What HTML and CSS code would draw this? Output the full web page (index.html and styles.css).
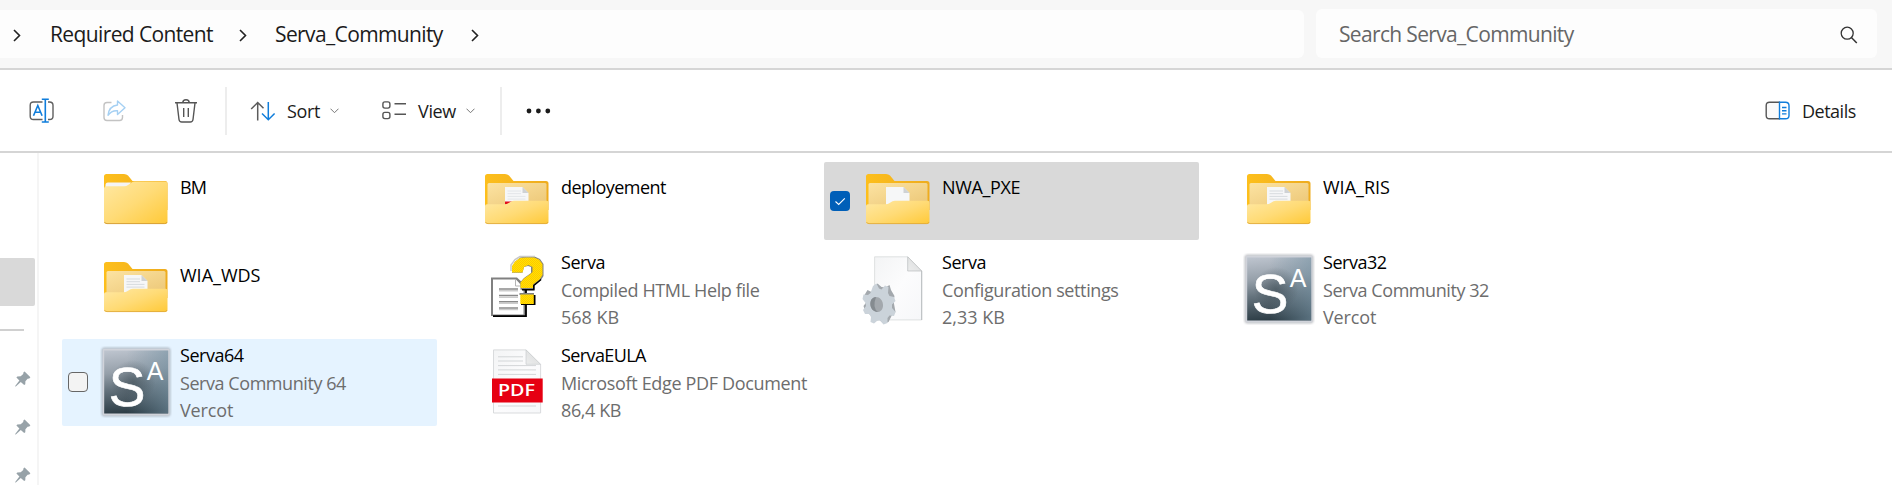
FILE: index.html
```html
<!DOCTYPE html>
<html lang="en">
<head>
<meta charset="utf-8">
<title>Serva_Community</title>
<link rel="stylesheet" href="styles.css">
</head>
<body>
<svg class="defs" width="0" height="0" aria-hidden="true">
  <defs>
    <linearGradient id="front" x1="0" y1="0" x2="1" y2="1"><stop offset="0" stop-color="#ffe8a3"/><stop offset=".5" stop-color="#ffdb76"/><stop offset="1" stop-color="#ffc937"/></linearGradient>
    <linearGradient id="back" x1="0" y1="0" x2="1" y2="0"><stop offset="0" stop-color="#fdbf1c"/><stop offset="1" stop-color="#eeac1f"/></linearGradient>
    <linearGradient id="inner" x1="0" y1="0" x2="1" y2="1"><stop offset="0" stop-color="#fce3a2"/><stop offset="1" stop-color="#ecc777"/></linearGradient>
    <linearGradient id="page" x1="0" y1="0" x2="1" y2="1"><stop offset="0" stop-color="#f3f4f5"/><stop offset=".5" stop-color="#fcfcfd"/><stop offset="1" stop-color="#f6f7f9"/></linearGradient>
    <linearGradient id="fold" x1="0" y1="1" x2="1" y2="0"><stop offset="0" stop-color="#eceded"/><stop offset="1" stop-color="#d9dadb"/></linearGradient>
    <linearGradient id="slate" x1=".2" y1="0" x2=".3" y2="1"><stop offset="0" stop-color="#bcc3cd"/><stop offset=".35" stop-color="#959fa9"/><stop offset=".6" stop-color="#66747e"/><stop offset="1" stop-color="#2c3c45"/></linearGradient>
    <linearGradient id="sheen" x1="0" y1="0" x2="1" y2="0"><stop offset=".35" stop-color="#7894a5" stop-opacity="0"/><stop offset="1" stop-color="#7894a5" stop-opacity=".6"/></linearGradient>
    <radialGradient id="shade" cx=".45" cy=".5" r=".35"><stop offset="0" stop-color="#38464e" stop-opacity=".55"/><stop offset="1" stop-color="#38464e" stop-opacity="0"/></radialGradient>
    <filter id="glow" x="-20%" y="-20%" width="140%" height="140%"><feGaussianBlur stdDeviation="1.3"/></filter>
    <pattern id="dither" width="2" height="2" patternUnits="userSpaceOnUse"><rect width="2" height="2" fill="#ffe600"/><rect width="1" height="1" fill="#ffc400"/><rect x="1" y="1" width="1" height="1" fill="#ffc400"/></pattern>

    <symbol id="folder-back" viewBox="0 0 72 72">
      <path d="M4 22V11.500Q4 9 6.500 9H24Q26.500 9 28 10.500L32.500 16H65Q67.500 16 67.500 18.500V45H4z" fill="url(#back)"/>
    </symbol>
    <symbol id="folder-open" viewBox="0 0 72 72">
      <use href="#folder-back"/>
      <path d="M6.500 40V19.500Q6.500 18 8 18H64Q65.500 18 65.500 19.500V40z" fill="url(#inner)"/>
    </symbol>
    <symbol id="folder-front" viewBox="0 0 72 72">
      <path d="M4 41Q4 39.300 6 39.300H23Q26 39.300 28 37.800L30.500 36.300Q31.500 35.700 33 35.700H65.500Q67.500 35.700 67.500 38V56.500Q67.500 59 65 59H6.500Q4 59 4 56.500z" fill="url(#front)"/>
      <path d="M4.500 57Q5 58.600 7 58.600H64.500Q66.700 58.600 67 57" fill="none" stroke="#dca63a" stroke-width=".8"/>
    </symbol>
    <symbol id="sheet" viewBox="0 0 72 72">
      <path d="M24 40V22H41.500L47.500 28V40z" fill="#f6f7f8"/>
      <path d="M41.500 22V28H47.500z" fill="#cfd2d4"/>
    </symbol>
    <symbol id="sheet-lines" viewBox="0 0 72 72">
      <path d="M26.500 26H40M26.500 28.700H40M26.500 31.400H44.500M26.500 34.100H44.500" stroke="#d7dbde" stroke-width="1"/>
    </symbol>
    <symbol id="serva" viewBox="0 0 72 72">
      <rect x="1.500" y="1.500" width="69" height="69" rx="3" fill="#777c84" opacity=".45" filter="url(#glow)"/>
      <rect x="2.800" y="2.800" width="66.700" height="66.700" rx="1" fill="#d0d3da"/>
      <g>
        <rect x="4.200" y="4.500" width="64" height="63" fill="url(#slate)"/>
        <rect x="4.200" y="4.500" width="64" height="63" fill="url(#sheen)"/>
        <rect x="4.200" y="4.500" width="64" height="63" fill="url(#shade)"/>
      </g>
      <text x="8.800" y="60.300" class="logo-s">S</text>
      <text x="46.700" y="34" class="logo-a">A</text>
    </symbol>
    <symbol id="pin" viewBox="0 0 16 16">
      <path d="M9.600.6 15.400 6.200 14.300 7.500 12.600 7.800 10.400 10.300 10.300 13.200 9.200 14 5.800 11 .8 15.600 0 15.200 4.400 9.600 1.400 6.600 2.300 5.500 5.700 5.300 8.200 3 8.500 1.300z" fill="#97a2a8"/>
    </symbol>
    <symbol id="next" viewBox="0 0 8 13"><path d="M1 1 6.500 6.500 1 12" fill="none" stroke="#222" stroke-width="1.600"/></symbol>
    <symbol id="down" viewBox="0 0 9 6"><path d="M.5.700 4.500 4.700 8.500.700" fill="none" stroke="#777" stroke-width="1"/></symbol>
  </defs>
</svg>

<header class="nav">
  <div class="address">
    <svg class="next n1"><use href="#next"/></svg>
    <span class="crumb c1">Required Content</span>
    <svg class="next n2"><use href="#next"/></svg>
    <span class="crumb c2">Serva_Community</span>
    <svg class="next n3"><use href="#next"/></svg>
  </div>
  <div class="search">
    <span class="search-text">Search Serva_Community</span>
    <svg class="search-icon" viewBox="0 0 18 18"><circle cx="7.200" cy="7.200" r="6" fill="none" stroke="#333" stroke-width="1.300"/><path d="M11.400 11.400 16.800 17" stroke="#333" stroke-width="1.500"/></svg>
  </div>
</header>

<div class="toolbar">
  <svg class="tool rename" viewBox="0 0 26 26" fill="none">
    <path d="M13.500 4H4.500Q1.200 4 1.200 7.300V18.200Q1.200 21.500 4.500 21.500H13.500M19 4H20.500Q24 4 24 7.300V18.200Q24 21.500 20.500 21.500H19" stroke="#5f5f5f" stroke-width="1.400"/>
    <path d="M12.800 1.200H19.800M12.800 24H19.800M16.300 1.200V24" stroke="#0f7ddb" stroke-width="1.600"/>
    <path d="M4.500 17.700 8.800 7.500 13.100 17.700M5.900 14.300H11.700" stroke="#0f7ddb" stroke-width="1.600"/>
  </svg>
  <svg class="tool share" viewBox="0 0 26 26" fill="none">
    <path d="M9.500 4.500H5Q2 4.500 2 7.500V19.500Q2 22.500 5 22.500H17.500Q20.500 22.500 20.500 19.500V17" stroke="#c3c3c3" stroke-width="1.400"/>
    <path d="M15.500 3 23 9.800 15.500 16.500V12.800Q9.500 12.300 6 17.300Q7 8 15.500 7z" stroke="#a5d0f3" stroke-width="1.400" stroke-linejoin="round"/>
  </svg>
  <svg class="tool trash" viewBox="0 0 26 26" fill="none" stroke="#555" stroke-width="1.400">
    <path d="M2 4.800H24M9.800 4.800Q9.800 1.800 13 1.800T16.200 4.800M4 5 6 21.500Q6.300 24 8.800 24H17.200Q19.700 24 20 21.500L22 5M10.700 10V19M15.300 10V19"/>
  </svg>
  <i class="divider d1"></i>
  <svg class="tool arrows" viewBox="0 0 26 26" fill="none" stroke-width="1.500">
    <path d="M7.700 22.500V4.500M1.200 11 7.700 4.500 13.500 10.300" stroke="#5c5c5c"/>
    <path d="M18.300 4V22M12 15.500 18.300 21.800 24.600 15.500" stroke="#0f7ddb"/>
  </svg>
  <span class="label sort">Sort</span>
  <svg class="down"><use href="#down"/></svg>
  <svg class="tool list" viewBox="0 0 26 26" fill="none" stroke="#555" stroke-width="1.400">
    <rect x="1.900" y="3.900" width="7" height="6.200" rx="2"/><rect x="1.900" y="14.400" width="7" height="6.200" rx="2"/>
    <path d="M13.500 5.800H25M13.500 16.300H25"/>
  </svg>
  <span class="label view">View</span>
  <svg class="down"><use href="#down"/></svg>
  <i class="divider d2"></i>
  <svg class="more" viewBox="0 0 25 6"><circle cx="3" cy="3" r="2.400"/><circle cx="12.400" cy="3" r="2.400"/><circle cx="21.800" cy="3" r="2.400"/></svg>
  <svg class="tool panel" viewBox="0 0 26 20" fill="none" stroke-width="1.400">
    <path d="M15 1.200H4.500Q1.200 1.200 1.200 4.500V14.500Q1.200 17.800 4.500 17.800H15" stroke="#555" fill="#fafafa"/>
    <path d="M14.500 1.200H20.500Q24 1.200 24 4.500V14.500Q24 17.800 20.500 17.800H14.500z" stroke="#0f7ddb"/>
    <path d="M17 6.500H21.500M17 9.700H21.500M17 12.900H21.500" stroke="#0f7ddb"/>
  </svg>
  <span class="label details">Details</span>
</div>

<div class="body">
  <aside class="side">
    <div class="side-selected"></div>
    <div class="side-rule"></div>
    <svg class="pin"><use href="#pin"/></svg>
    <svg class="pin"><use href="#pin"/></svg>
    <svg class="pin"><use href="#pin"/></svg>
  </aside>
  <main class="files">
    <div class="item">
      <i class="check none"></i>
      <svg class="icon" viewBox="0 0 72 72">
        <use href="#folder-back"/>
        <path d="M5.500 24V20Q5.500 17.500 8 17.500H31L28 22z" fill="#f4f4f6"/>
        <path d="M4 23.500Q4 21.300 6.500 21.300H24Q26.500 21.300 28 20L32 17.200Q33 16.500 34.500 16.500H65.200Q67.500 16.500 67.500 19V56.500Q67.500 59 65 59H6.500Q4 59 4 56.500z" fill="url(#front)"/>
        <path d="M4.500 57Q5 58.600 7 58.600H64.500Q66.700 58.600 67 57" fill="none" stroke="#d39c35" stroke-width=".9"/>
      </svg>
      <div class="text"><span class="name t-bm">BM</span></div>
    </div>
    <div class="item">
      <i class="check none"></i>
      <svg class="icon" viewBox="0 0 72 72"><use href="#folder-open"/><use href="#sheet"/><use href="#sheet-lines" opacity=".6"/><path d="M24 36.500H34L30 40H24z" fill="#e30d1b"/><use href="#folder-front"/></svg>
      <div class="text"><span class="name t-dep">deployement</span></div>
    </div>
    <div class="item selected">
      <i class="check on"><svg viewBox="0 0 20 20"><path d="M5.500 10.500 8.700 13.500 14.800 7.300" fill="none" stroke="#fff" stroke-width="1.100"/></svg></i>
      <svg class="icon" viewBox="0 0 72 72"><use href="#folder-open"/><use href="#sheet"/><use href="#folder-front"/></svg>
      <div class="text"><span class="name t-nwa">NWA_PXE</span></div>
    </div>
    <div class="item">
      <i class="check none"></i>
      <svg class="icon" viewBox="0 0 72 72"><use href="#folder-open"/><use href="#sheet"/><use href="#sheet-lines"/><use href="#folder-front"/></svg>
      <div class="text"><span class="name t-ris">WIA_RIS</span></div>
    </div>

    <div class="item tall">
      <i class="check none"></i>
      <svg class="icon" viewBox="0 0 72 72"><use href="#folder-open"/><use href="#sheet"/><use href="#sheet-lines"/><use href="#folder-front"/></svg>
      <div class="text"><span class="name t-wds">WIA_WDS</span></div>
    </div>
    <div class="item tall">
      <i class="check none"></i>
      <svg class="icon" viewBox="0 0 72 72">
        <path d="M10 24.500H36L45 33V63H10z" fill="#808080"/>
        <path d="M12 63.200H45V33" fill="none" stroke="#000" stroke-width="1.800"/>
        <path d="M12 26.500H34.500V32.500H42.500V61.500H12z" fill="#fff"/>
        <path d="M34.500 26V33H41" fill="#fff" stroke="#b5b5b5"/>
        <path d="M18 36H37M18 42.500H37M18 48.700H37M18 55H37" stroke="#8a8a8a" stroke-width="1.600"/>
        <path d="M18 37.700H37M18 44.200H37M18 50.400H37M18 56.600H37" stroke="#ccc" stroke-width="1.400"/>
        <path d="M40 42H54.500V52H40z" fill="#000"/>
        <path d="M38.500 40H53V42H38.500z" fill="#808080"/>
        <path d="M39.300 41.500H52.800V51H39.300z" fill="url(#dither)"/>
        <path d="M31 19.800V14L34 9 39 4.500 46 3.300H53L59 6 62.500 11V23L60 27 53.500 32.500V36.800H39.500V29L43 25 50 20V14L47 13 43 14 41.500 19.800z" fill="#808080"/>
        <path d="M41 36.700H52.800V32.500L60 26.500" fill="none" stroke="#000" stroke-width="1.600"/>
        <path d="M30 18V12L34 6.500 39 3.500H54" fill="none" stroke="#c8c8c8" stroke-width="1.500"/>
        <path d="M31 19.500V13L34 8.500 39 5 45 4.500H53L58 6.500 61.500 11V22L58.500 26.500 52 31.500V35H39.500V29.500L43 25.500 48 22 51.500 19V14L47.500 12 43 14 41.500 19.500z" fill="url(#dither)"/>
      </svg>
      <div class="text full"><span class="name t-serva">Serva</span><span class="meta t-chm">Compiled HTML Help file</span><span class="meta t-568">568 KB</span></div>
    </div>
    <div class="item tall">
      <i class="check none"></i>
      <svg class="icon" viewBox="0 0 72 72">
        <path d="M12.600 3.800H45.700L59.700 18V66.900H12.600z" fill="url(#page)" stroke="#d8dadb" stroke-width=".8"/>
        <path d="M59.700 18V67" stroke="#b8bcbe" stroke-width="1"/>
        <path d="M45.700 3.800V18H59.700z" fill="url(#fold)" stroke="#b9bbbd" stroke-width=".7"/>
        <path transform="translate(1.500 -1)" fill="#a3a8ad" d="M11.500 34 14 31.500 18 35 22 35.500 26 33 27.500 38 31 44 30 49 32 60 28 64 25 70 20 71.500 16 68 9 69 7 63 2 60 0 54 3 50 1 43 4 38 8 40z"/>
        <path fill="#cbd3da" fill-rule="evenodd" d="M11 33 14.500 30.500 17 35.500 19.500 36.500 23 32.500 26.500 34 26 40 27.500 43 32 44 33.500 48 30 51.500 30 55 33.500 59 32 63 27.500 62.500 25.500 65 25.500 70 21.500 71.500 18 67.500 15.500 67.500 12 70.500 8.500 69 9 64 7.500 61 3 61 1 57 4 53 3.500 50 .5 46 1.500 41.500 6 42 8.500 40zM14 44C6 44 6.500 59 16 59C24 58 22 44 14 44z"/>
        <path fill="#858b90" d="M14 44C6 44 6.500 59 16 59Q10 55 14 44z"/>
      </svg>
      <div class="text full"><span class="name t-serva">Serva</span><span class="meta t-cfg">Configuration settings</span><span class="meta t-233">2,33 KB</span></div>
    </div>
    <div class="item tall">
      <i class="check none"></i>
      <svg class="icon" viewBox="0 0 72 72"><use href="#serva"/></svg>
      <div class="text full"><span class="name t-s32">Serva32</span><span class="meta t-com">Serva Community 32</span><span class="meta t-ver">Vercot</span></div>
    </div>

    <div class="item tall hover">
      <i class="check off"></i>
      <svg class="icon" viewBox="0 0 72 72"><use href="#serva"/></svg>
      <div class="text full"><span class="name t-s32">Serva64</span><span class="meta t-com">Serva Community 64</span><span class="meta t-ver">Vercot</span></div>
    </div>
    <div class="item tall">
      <i class="check none"></i>
      <svg class="icon" viewBox="0 0 72 72">
        <path d="M12.500 3.900H45L59.600 18.500V67H12.500z" fill="url(#page)" stroke="#d5d7d9" stroke-width=".9"/>
        <path d="M45 3.900V18.300H59.600z" fill="url(#fold)" stroke="#c5c7c9" stroke-width=".6"/>
        <path d="M17 10.800H42M17 15H42M17 19.600H55M17 23.900H55M17 28.400H55M17 60H55" stroke="#d3d6d8" stroke-width="1"/>
        <path d="M11 32.500H61.700V56.500H11z" fill="#e60012"/>
        <text x="17" y="50.400" class="pdf" textLength="37" lengthAdjust="spacingAndGlyphs">PDF</text>
      </svg>
      <div class="text full"><span class="name t-eula">ServaEULA</span><span class="meta t-edge">Microsoft Edge PDF Document</span><span class="meta t-864">86,4 KB</span></div>
    </div>
  </main>
</div>
</body>
</html>
```
FILE: styles.css
```css
* { box-sizing: border-box; }
body {
  margin: 0;
  width: 1892px;
  height: 485px;
  overflow: hidden;
  background: #fff;
  color: #1b1b1b;
  font-family: "Open Sans", "Noto Sans", sans-serif;
  font-size: 18px;
  white-space: nowrap;
}
svg { display: block; flex: none; }
.defs { height: 0; }

.nav {
  display: flex;
  height: 70px;
  padding-top: 9px;
  background: #f7f7f7;
  border-bottom: 2px solid #d5d5d5;
}
.address {
  display: flex;
  align-items: center;
  width: 1304px;
  height: 48px;
  margin-top: 1px;
  background: #fdfdfd;
  border-radius: 0 6px 6px 0;
  font-size: 21px;
  letter-spacing: -.62px;
}
.next { width: 8px; height: 13px; margin-top: 2px; }
.n1 { margin-left: 12.500px; }
.n2 { margin-left: 25px; }
.n3 { margin-left: 29px; }
.crumb { line-height: 28px; }
.c1 { width: 164px; margin-left: 29.500px; }
.c2 { width: 167px; margin-left: 28px; }
.search {
  display: flex;
  align-items: center;
  justify-content: space-between;
  width: 561px;
  height: 49px;
  margin-left: 12px;
  padding: 0 19px 0 23px;
  background: #fdfdfd;
  border-radius: 6px;
  color: #666;
  font-size: 21px;
  letter-spacing: -.66px;
}
.search-icon { width: 18px; height: 18px; margin-top: 3px; }

.toolbar {
  display: flex;
  align-items: center;
  height: 83px;
  border-bottom: 2px solid #d5d5d5;
}
.tool { width: 26px; height: 26px; }
.rename { margin-left: 29px; }
.share { margin-left: 47px; }
.trash { margin-left: 45px; }
.divider { width: 2px; height: 48px; background: #ededed; flex: none; }
.d1 { margin-left: 26px; }
.arrows { margin-left: 23px; }
.label { line-height: 26px; letter-spacing: -.35px; }
.sort { width: 33px; margin-left: 11px; }
.down { width: 9px; height: 6px; margin-left: 10px; }
.list { margin-left: 42px; }
.view { width: 38px; margin-left: 11px; }
.d2 { margin-left: 25px; }
.more { width: 25px; height: 6px; margin-left: 24px; fill: #1b1b1b; }
.panel { width: 26px; height: 20px; margin-left: auto; }
.label.details { width: 53px; margin: 0 37px 0 11px; letter-spacing: -.5px; }

.body { display: flex; height: 332px; }
.side { width: 39px; border-right: 2px solid #f5f5f5; }
.side-selected { width: 35px; height: 48px; margin-top: 105px; background: #d9d9d9; border-radius: 0 2px 2px 0; }
.side-rule { width: 24px; height: 2px; margin: 23px 0 40px; background: #d0d0d0; }
.pin { width: 16px; height: 16px; margin: 0 0 32px 15px; }

.files {
  display: grid;
  grid-template-columns: repeat(4, 375px);
  grid-template-rows: 78px 87px 87px;
  gap: 6px;
  padding: 9px 0 0 23px;
}
.item { display: flex; align-items: center; padding-left: 6px; border-radius: 2px; }
.tall { padding-bottom: 1px; }
.selected { background: #d9d9d9; }
.hover { background: #e5f3ff; }
.check { width: 20px; height: 20px; margin-right: 12px; border-radius: 4px; flex: none; }
.on { background: #005fb8; }
.off { background: #f3f3f3; border: 1px solid #666; }
.icon { width: 72px; height: 72px; margin-right: 8px; }
.text { display: flex; flex-direction: column; align-items: flex-start; min-height: 54px; line-height: 27px; }
.full { align-self: flex-start; padding-top: 3px; }
.full .name { margin-bottom: 1px; }
.name { color: #000; }
.meta { color: #6d6d6d; }

/* Tracking per label */
.t-bm { letter-spacing: -.9px; }
.t-dep { letter-spacing: -.55px; }
.t-nwa { letter-spacing: -.35px; }
.t-serva, .t-s32 { letter-spacing: -.48px; }
.t-eula { letter-spacing: -.6px; }
.t-chm { letter-spacing: -.37px; }
.t-cfg { letter-spacing: -.38px; }
.t-com { letter-spacing: -.44px; }
.t-ver { letter-spacing: -.15px; }
.t-edge { letter-spacing: -.34px; }
.t-864 { letter-spacing: -.4px; }

.logo-s { font: 55px "Liberation Sans", sans-serif; fill: #fff; stroke: #fff; stroke-width: .6px; }
.logo-a { font: 25px "Liberation Sans", sans-serif; fill: #fff; }
.pdf { font: 600 16.500px "Open Sans", sans-serif; fill: #fff; }
```
